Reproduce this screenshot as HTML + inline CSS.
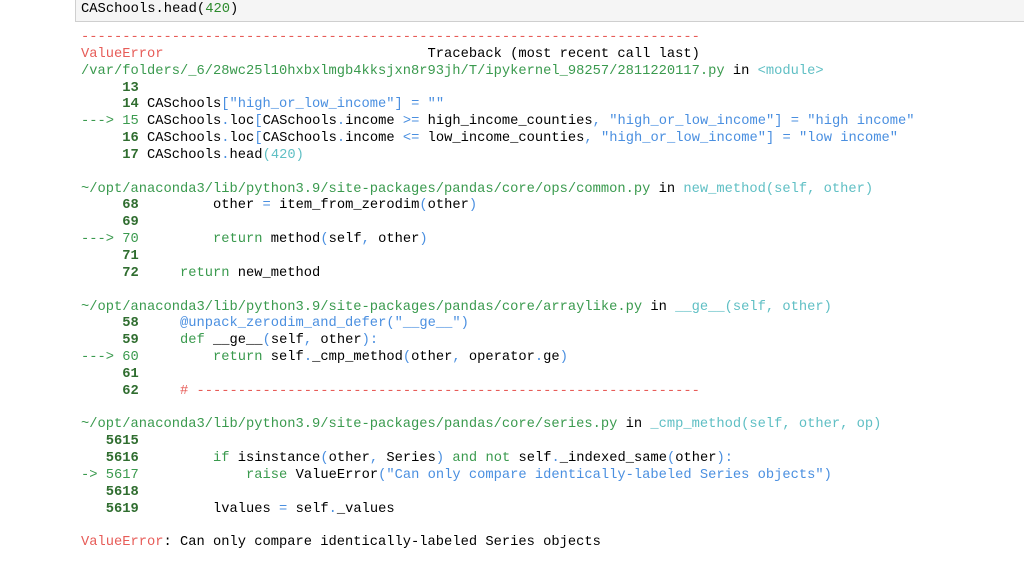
<!DOCTYPE html>
<html><head><style>
body{margin:0;background:#fff;width:1024px;height:575px;overflow:hidden;position:relative;font-family:"Liberation Mono",monospace;}
.in{position:absolute;left:75px;top:-1px;width:960px;height:23px;background:#f5f5f5;border:1px solid #cfcfcf;box-sizing:border-box;}
.in pre{margin:0;position:absolute;left:5px;top:1px;font-size:13.8px;line-height:17px;color:#000;}
pre{font-family:"Liberation Mono",monospace;}
.out{position:absolute;left:81px;top:30px;margin:0;font-size:13.75px;line-height:16.85px;color:#000;}
.r{color:#e75c58}.g{color:#3a9a4e}.n{color:#2f6d2f;font-weight:bold}.b{color:#4a8fe0}.c{color:#5fbfc4}.k{color:#3a9a4e}.d{color:#2e8b2e}
</style></head><body>
<div class="in"><pre>CASchools.head(<span class="d">420</span>)</pre></div>
<pre class="out"><span class="r">---------------------------------------------------------------------------</span>
<span class="r">ValueError</span>                                Traceback (most recent call last)
<span class="g">/var/folders/_6/28wc25l10hxbxlmgb4kksjxn8r93jh/T/ipykernel_98257/2811220117.py</span> in <span class="c">&lt;module&gt;</span>
<span class="n">     13</span> 
<span class="n">     14</span> CASchools<span class="b">["high_or_low_income"]</span> <span class="b">=</span> <span class="b">""</span>
<span class="g">---&gt; 15</span> CASchools<span class="b">.</span>loc<span class="b">[</span>CASchools<span class="b">.</span>income <span class="b">&gt;=</span> high_income_counties<span class="b">,</span> <span class="b">"high_or_low_income"]</span> <span class="b">=</span> <span class="b">"high income"</span>
<span class="n">     16</span> CASchools<span class="b">.</span>loc<span class="b">[</span>CASchools<span class="b">.</span>income <span class="b">&lt;=</span> low_income_counties<span class="b">,</span> <span class="b">"high_or_low_income"]</span> <span class="b">=</span> <span class="b">"low income"</span>
<span class="n">     17</span> CASchools<span class="b">.</span>head<span class="c">(420)</span>

<span class="g">~/opt/anaconda3/lib/python3.9/site-packages/pandas/core/ops/common.py</span> in <span class="c">new_method(self, other)</span>
<span class="n">     68</span>         other <span class="b">=</span> item_from_zerodim<span class="b">(</span>other<span class="b">)</span>
<span class="n">     69</span> 
<span class="g">---&gt; 70</span>         <span class="k">return</span> method<span class="b">(</span>self<span class="b">,</span> other<span class="b">)</span>
<span class="n">     71</span> 
<span class="n">     72</span>     <span class="k">return</span> new_method

<span class="g">~/opt/anaconda3/lib/python3.9/site-packages/pandas/core/arraylike.py</span> in <span class="c">__ge__(self, other)</span>
<span class="n">     58</span>     <span class="b">@unpack_zerodim_and_defer</span><span class="b">("__ge__")</span>
<span class="n">     59</span>     <span class="k">def</span> __ge__<span class="b">(</span>self<span class="b">,</span> other<span class="b">):</span>
<span class="g">---&gt; 60</span>         <span class="k">return</span> self<span class="b">.</span>_cmp_method<span class="b">(</span>other<span class="b">,</span> operator<span class="b">.</span>ge<span class="b">)</span>
<span class="n">     61</span> 
<span class="n">     62</span>     <span class="r"># -------------------------------------------------------------</span>

<span class="g">~/opt/anaconda3/lib/python3.9/site-packages/pandas/core/series.py</span> in <span class="c">_cmp_method(self, other, op)</span>
<span class="n">   5615</span> 
<span class="n">   5616</span>         <span class="k">if</span> isinstance<span class="b">(</span>other<span class="b">,</span> Series<span class="b">)</span> <span class="k">and</span> <span class="k">not</span> self<span class="b">.</span>_indexed_same<span class="b">(</span>other<span class="b">):</span>
<span class="g">-&gt; 5617</span>             <span class="k">raise</span> ValueError<span class="b">("Can only compare identically-labeled Series objects")</span>
<span class="n">   5618</span> 
<span class="n">   5619</span>         lvalues <span class="b">=</span> self<span class="b">.</span>_values

<span class="r">ValueError</span>: Can only compare identically-labeled Series objects</pre>
</body></html>
